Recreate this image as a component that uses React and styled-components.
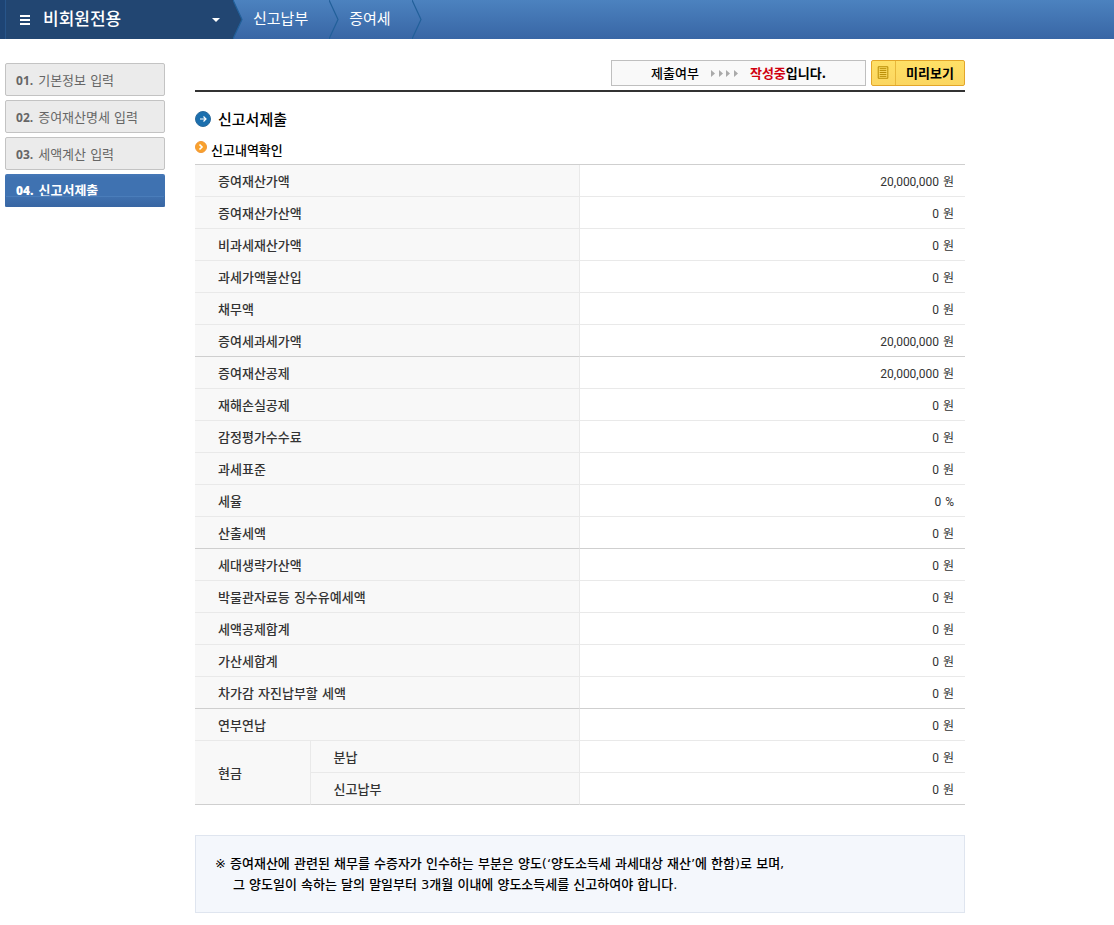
import React from "react";
import styled, { createGlobalStyle, css } from "styled-components";

const Global = createGlobalStyle`
  * { box-sizing: border-box; }
  body {
    margin: 0;
    background: #fff;
    color: #333;
    font: 500 13px/20px "DejaVu Sans", "Noto Sans CJK KR", sans-serif;
  }
`;

const TopBar = styled.header`
  display: flex;
  height: 39px;
  background: linear-gradient(#4c82bf, #3866a5);
`;

const MemberMenu = styled.button`
  display: flex;
  align-items: center;
  width: 233px;
  padding: 0 13px 0 20px;
  border: 0;
  background: #224672;
  box-shadow: inset 5px 0 #1e4474, inset 6px 0 #28558a;
  color: #fff;
  font: 500 17px/24px "Noto Sans CJK KR", sans-serif;
  cursor: pointer;

  span {
    flex: 1;
    padding: 0 0 3px 13px;
    text-align: left;
  }
`;

const Crumbs = styled.nav`
  display: flex;
  align-items: center;
`;

const Crumb = styled.a`
  padding: 0 21px 4px 10px;
  color: #fff;
  font: 400 15px/24px "Noto Sans CJK KR", sans-serif;
  text-decoration: none;
`;

const Arrow = styled.svg`
  flex: none;
  display: block;
  width: 10px;
  height: 39px;
`;

const Page = styled.div`
  display: grid;
  grid-template-columns: 160px minmax(0, 770px);
  column-gap: 30px;
  padding: 21px 5px 12px;
`;

const Steps = styled.nav`
  display: flex;
  flex-direction: column;
  gap: 4px;
  padding-top: 3px;
`;

const Step = styled.a`
  display: flex;
  align-items: center;
  gap: 5px;
  height: 33px;
  padding: 2px 10px 0;
  border: 1px solid #c3c3c3;
  border-radius: 2px;
  background: #ebebeb;
  color: #666;
  font-weight: 400;
  text-decoration: none;

  b {
    font-family: "Open Sans", sans-serif;
    font-size: 12px;
  }

  ${(p) =>
    p.$active &&
    css`
      position: relative;
      overflow: hidden;
      border: 0;
      padding: 0 11px;
      background: linear-gradient(#4678b7, #3f72b1 4px);
      color: #fff;
      font-weight: 700;

      &::after {
        content: "";
        position: absolute;
        inset: auto 0 0;
        height: 11px;
        border: solid #e4ecf5;
        border-width: 0 1px;
        border-image: linear-gradient(#e4ecf5 1px, #3c6caa 1px) 1;
        background: linear-gradient(#4a7dba 1px, #3f70ae 1px, #3866a3);
      }
    `}
`;

const StatusBar = styled.div`
  display: flex;
  justify-content: flex-end;
  gap: 5px;
  padding-bottom: 4px;
  border-bottom: 2px solid #333;
`;

const Status = styled.p`
  display: flex;
  align-items: center;
  justify-content: center;
  gap: 12px;
  width: 255px;
  height: 26px;
  margin: 0;
  border: 1px solid #bfbfbf;
  background: #f9f9f9;
  color: #000;
  font-family: "Noto Sans CJK KR", sans-serif;

  strong { font-weight: 700; }
  em { color: #d0000f; font-style: normal; }
`;

const Preview = styled.button`
  display: flex;
  width: 94px;
  height: 26px;
  padding: 0;
  border: 1px solid #e3a62a;
  border-radius: 2px;
  background: linear-gradient(#ffe066, #fbd661);
  color: #000;
  font: 700 13px/24px "Noto Sans CJK KR", sans-serif;
  cursor: pointer;

  svg {
    flex: none;
    border-right: 1px solid #e8b83b;
  }

  span { flex: 1; }
`;

const Title = styled.h1`
  display: flex;
  align-items: center;
  gap: 7px;
  margin: 17px 0 0;
  color: #000;
  font: 500 15px/20px "Noto Sans CJK KR", sans-serif;
`;

const Subtitle = styled.h2`
  display: flex;
  align-items: flex-start;
  gap: 4px;
  margin: 11px 0 4px;
  color: #000;
  font: 500 13px/20px "Noto Sans CJK KR", sans-serif;

  svg { margin-top: 1px; }
`;

const Table = styled.table`
  width: 100%;
  table-layout: fixed;
  border-collapse: separate;
  border-spacing: 0;
  border-top: 1px solid #cfcfcf;
`;

const line = (p) => (p.$last ? "#cfcfcf" : "#e9e9e9");

const Label = styled.th`
  height: 32px;
  padding: 2px 23px 0;
  border-right: 1px solid #e9e9e9;
  border-bottom: 1px solid ${line};
  background: #f8f8f8;
  color: #333;
  font-weight: 500;
  text-align: left;
`;

const Amount = styled.td`
  height: 32px;
  padding: 2px 11px 0;
  border-bottom: 1px solid ${line};
  color: #333;
  font: 400 12px/20px Roboto, "Noto Sans CJK KR", sans-serif;
  text-align: right;
`;

const Unit = styled.span`
  padding-left: 1px;
`;

const Notice = styled.p`
  margin: 30px 0 0;
  padding: 17px 19px;
  border: 1px solid #dfe5ef;
  background: #f4f7fc;
  color: #000;
  line-height: 21px;

  span {
    display: block;
    padding-left: 18px;
  }
`;

const steps = ["기본정보 입력", "증여재산명세 입력", "세액계산 입력", "신고서제출"];

const rows = [
  { label: "증여재산가액", amount: "20,000,000" },
  { label: "증여재산가산액", amount: "0" },
  { label: "비과세재산가액", amount: "0" },
  { label: "과세가액불산입", amount: "0" },
  { label: "채무액", amount: "0" },
  { label: "증여세과세가액", amount: "20,000,000", last: true },
  { label: "증여재산공제", amount: "20,000,000" },
  { label: "재해손실공제", amount: "0" },
  { label: "감정평가수수료", amount: "0" },
  { label: "과세표준", amount: "0" },
  { label: "세율", amount: "0", unit: "%" },
  { label: "산출세액", amount: "0", last: true },
  { label: "세대생략가산액", amount: "0" },
  { label: "박물관자료등 징수유예세액", amount: "0" },
  { label: "세액공제합계", amount: "0" },
  { label: "가산세합계", amount: "0" },
  { label: "차가감 자진납부할 세액", amount: "0", last: true },
  { label: "연부연납", amount: "0" },
];

function Chevron({ filled }) {
  return (
    <Arrow viewBox="0 0 10 39" aria-hidden="true">
      {filled && <path d="M0 0L9 19.5 0 39z" fill="#224672" />}
      <path d="M0 0L9 19.5 0 39" fill="none" stroke="#22609a" strokeWidth="1.2" />
    </Arrow>
  );
}

function AmountCell({ value, unit = "원", last }) {
  return (
    <Amount $last={last}>
      {value} <Unit>{unit}</Unit>
    </Amount>
  );
}

export default function App() {
  return (
    <>
      <Global />
      <TopBar>
        <MemberMenu type="button">
          <svg width="10" height="10" viewBox="0 0 10 10" fill="#fff" aria-hidden="true">
            <path d="M0 0h10v2H0zM0 4h10v2H0zM0 8h10v2H0z" />
          </svg>
          <span>비회원전용</span>
          <svg width="8" height="4" viewBox="0 0 8 4" fill="#fff" aria-hidden="true">
            <path d="M0 0h8L4 4z" />
          </svg>
        </MemberMenu>
        <Crumbs aria-label="현재 위치">
          <Chevron filled />
          <Crumb href="#report">신고납부</Crumb>
          <Chevron />
          <Crumb href="#gift">증여세</Crumb>
          <Chevron />
        </Crumbs>
      </TopBar>
      <Page>
        <Steps aria-label="신고 단계">
          {steps.map((name, i) => (
            <Step
              key={name}
              href={`#step${i + 1}`}
              $active={i === 3}
              aria-current={i === 3 ? "step" : undefined}
            >
              <b>0{i + 1}.</b>
              <span>{name}</span>
            </Step>
          ))}
        </Steps>
        <main>
          <StatusBar>
            <Status>
              <span>제출여부</span>
              <svg width="27" height="7" viewBox="0 0 27 7" fill="#aaa" aria-hidden="true">
                <path d="M0 0l4 3.5L0 7zM8 0l4 3.5L8 7zM15 0l4 3.5L15 7zM23 0l4 3.5L23 7z" />
              </svg>
              <strong><em>작성중</em>입니다.</strong>
            </Status>
            <Preview type="button">
              <svg width="24" height="24" viewBox="0 0 24 24" aria-hidden="true">
                <path d="M6.5 5.5h10v12h-10z" fill="none" stroke="#b58900" />
                <path d="M8 7.5h7M8 9.5h7M8 11.5h7M8 13.5h7M8 15.5h7" stroke="#b58900" />
              </svg>
              <span>미리보기</span>
            </Preview>
          </StatusBar>
          <Title>
            <svg width="16" height="16" viewBox="0 0 16 16" aria-hidden="true">
              <circle cx="8" cy="8" r="7.5" fill="#1b6fae" stroke="#2a6a9c" />
              <path d="M5 8h6M8.5 5.5L11 8l-2.5 2.5" fill="none" stroke="#fff" strokeWidth="1.2" />
            </svg>
            신고서제출
          </Title>
          <Subtitle>
            <svg width="12" height="12" viewBox="0 0 12 12" aria-hidden="true">
              <circle cx="6" cy="6" r="5.5" fill="#f9a12c" stroke="#f0983a" />
              <path d="M4.5 3.500L7 6l-2.5 2.5" fill="none" stroke="#fff" strokeWidth="1.6" />
            </svg>
            신고내역확인
          </Subtitle>
          <Table>
            <colgroup>
              <col width="15%" />
              <col width="35%" />
              <col />
            </colgroup>
            <tbody>
              {rows.map(({ label, amount, unit, last }) => (
                <tr key={label}>
                  <Label scope="row" colSpan={2} $last={last}>{label}</Label>
                  <AmountCell value={amount} unit={unit} last={last} />
                </tr>
              ))}
              <tr>
                <Label scope="rowgroup" rowSpan={2} $last>현금</Label>
                <Label scope="row">분납</Label>
                <AmountCell value="0" />
              </tr>
              <tr>
                <Label scope="row" $last>신고납부</Label>
                <AmountCell value="0" last />
              </tr>
            </tbody>
          </Table>
          <Notice>
            ※ 증여재산에 관련된 채무를 수증자가 인수하는 부분은 양도(‘양도소득세 과세대상 재산’에 한함)로 보며,
            <span>그 양도일이 속하는 달의 말일부터 3개월 이내에 양도소득세를 신고하여야 합니다.</span>
          </Notice>
        </main>
      </Page>
    </>
  );
}
